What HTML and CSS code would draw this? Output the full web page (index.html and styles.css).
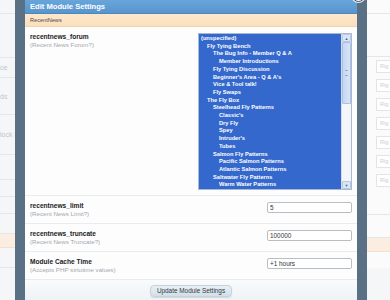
FILE: index.html
```html
<!DOCTYPE html>
<html lang="en">
<head>
  <meta charset="UTF-8" />
  <title>Edit Module Settings</title>
  <meta name="viewport" content="width=device-width, initial-scale=1.0" />
  <link rel="stylesheet" href="styles.css">
</head>
<body>

  <div class="bg-page">
    <div class="bg-left">
      <div class="bg-row h14"></div>
      <div class="bg-row h44"></div>
      <div class="bg-row h20"><span>ce</span></div>
      <div class="bg-row h37"><span>ds</span></div>
      <div class="bg-row h40"><span>lock has</span></div>
      <div class="bg-row h25"></div>
      <div class="bg-row h17"></div>
      <div class="bg-row h17"></div>
      <div class="bg-row h20"></div>
      <div class="bg-row h14 beige"></div>
      <div class="bg-row h20"></div>
    </div>

    <div class="bg-right">
      <div class="bg-row h14"></div>
      <div class="bg-row h43"></div>
      <div class="bg-slot"><span class="num">1</span><span class="fake-input">Rig</span></div>
      <div class="bg-slot"><span class="num">2</span><span class="fake-input">Rig</span></div>
      <div class="bg-slot"><span class="num">3</span><span class="fake-input">Rig</span></div>
      <div class="bg-slot"><span class="num">4</span><span class="fake-input">Rig</span></div>
      <div class="bg-slot"><span class="num">5</span><span class="fake-input">Rig</span></div>
      <div class="bg-slot"><span class="num">6</span><span class="fake-input">Rig</span></div>
      <div class="bg-slot"><span class="num">7</span><span class="fake-input">Rig</span></div>
      <div class="bg-row h25"></div>
      <div class="bg-row h23"></div>
      <div class="bg-row h14 beige"></div>
    </div>
  </div>

  <div class="modal">
    <span class="close"></span>
    <div class="modal-title">Edit Module Settings</div>
    <div class="modal-sub">RecentNews</div>

    <div class="setting">
      <div class="label">
        <b>recentnews_forum</b>
        <small>(Recent News Forum?)</small>
      </div>
      <div class="select">
        <div class="options">
          <div class="opt">(unspecified)</div>
          <div class="opt l1">Fly Tying Bench</div>
          <div class="opt l2">The Bug Info - Member Q &amp; A</div>
          <div class="opt l3">Member Introductions</div>
          <div class="opt l2">Fly Tying Discussion</div>
          <div class="opt l2">Beginner's Area - Q &amp; A's</div>
          <div class="opt l2">Vice &amp; Tool talk!</div>
          <div class="opt l2">Fly Swaps</div>
          <div class="opt l1">The Fly Box</div>
          <div class="opt l2">Steelhead Fly Patterns</div>
          <div class="opt l3">Classic's</div>
          <div class="opt l3">Dry Fly</div>
          <div class="opt l3">Spey</div>
          <div class="opt l3">Intruder's</div>
          <div class="opt l3">Tubes</div>
          <div class="opt l2">Salmon Fly Patterns</div>
          <div class="opt l3">Pacific Salmon Patterns</div>
          <div class="opt l3">Atlantic Salmon Patterns</div>
          <div class="opt l2">Saltwater Fly Patterns</div>
          <div class="opt l3">Warm Water Patterns</div>
        </div>
        <div class="scrollbar">
          <span class="arrow">&#9650;</span>
          <span class="thumb"><i></i></span>
          <span class="track"></span>
          <span class="arrow">&#9660;</span>
        </div>
      </div>
    </div>

    <div class="setting">
      <div class="label">
        <b>recentnews_limit</b>
        <small>(Recent News Limit?)</small>
      </div>
      <div class="field">5</div>
    </div>

    <div class="setting">
      <div class="label">
        <b>recentnews_truncate</b>
        <small>(Recent News Truncate?)</small>
      </div>
      <div class="field">100000</div>
    </div>

    <div class="setting">
      <div class="label">
        <b>Module Cache Time</b>
        <small>(Accepts PHP strtotime values)</small>
      </div>
      <div class="field">+1 hours</div>
    </div>

    <div class="modal-foot">
      <button class="btn">Update Module Settings</button>
    </div>
  </div>

</body>
</html>
```

FILE: styles.css
```css
body {
  margin: 0;
  padding: 0;
  height: 300px;
  overflow: hidden;
  background: #f4f6f7;
  font-family: 'Liberation Sans', Arial, sans-serif;
  position: relative;
}

/* faded page behind the dialog */
.bg-page {
  display: flex;
  justify-content: space-between;
  color: #c2c6ca;
  font-size: 7px;
}

.bg-left {
  width: 25px;
}

.bg-right {
  width: 33px;
  background: #fbfbfb;
}

.bg-row {
  border-bottom: 1px solid #e4e7ea;
  display: flex;
  align-items: center;
  white-space: nowrap;
  box-sizing: border-box;
}

.bg-row.beige {
  background: #fbeee0;
  border-color: #f3e1cc;
}

.h14 { height: 14px; }
.h17 { height: 17px; }
.h20 { height: 20px; }
.h23 { height: 23px; }
.h25 { height: 25px; }
.h37 { height: 37px; }
.h40 { height: 40px; }
.h43 { height: 43px; }
.h44 { height: 44px; }

.bg-slot {
  height: 19px;
  display: flex;
  align-items: center;
  gap: 11px;
  padding-left: 4px;
}

.num {
  width: 4px;
  color: #9fb0bd;
  font-size: 6px;
}

.fake-input {
  flex: 1;
  height: 11px;
  border: 1px solid #e2e5e8;
  border-right: none;
  background: #fff;
  font-size: 5.5px;
  line-height: 11px;
  padding-left: 3px;
  color: #c9cdd1;
}

/* dialog */
.modal {
  position: absolute;
  left: 15px;
  top: -10px;
  width: 332px;
  border: 10px solid rgba(38, 68, 94, 0.76);
  border-radius: 8px;
  background: #fdfdfe;
}

.close {
  position: absolute;
  top: -11px;
  right: -8px;
  width: 11px;
  height: 11px;
  border: 1.5px solid #3b4f5e;
  border-radius: 50%;
  background: #fff;
  box-shadow: 0 0 0 1px #e9eef2;
}

.modal-title {
  height: 14px;
  line-height: 14px;
  padding-left: 5px;
  background: linear-gradient(#68a5da, #5895cd);
  color: #fff;
  font-weight: bold;
  font-size: 7.6px;
  border-bottom: 1px solid #4f87bb;
  box-sizing: border-box;
}

.modal-sub {
  height: 13px;
  line-height: 13px;
  padding-left: 5px;
  background: linear-gradient(#fde8cc, #fbdfbd);
  border-bottom: 1px solid #f2d3ac;
  color: #4a4a4a;
  font-size: 5.6px;
  box-sizing: border-box;
}

.setting {
  display: flex;
  justify-content: space-between;
  align-items: flex-start;
  padding: 6px 5px 5px;
  border-bottom: 1px solid #e9ebed;
}

.setting:first-of-type {
  padding-bottom: 6px;
}

.label {
  display: flex;
  flex-direction: column;
  line-height: 8px;
}

.label b {
  font-size: 6.6px;
  color: #222;
}

.label small {
  font-size: 6.2px;
  color: #a2a8ad;
}

.field {
  width: 85px;
  height: 11px;
  box-sizing: border-box;
  border: 1px solid #b9bec3;
  border-radius: 2px;
  background: #fff;
  font-size: 6.4px;
  line-height: 9px;
  padding-left: 2px;
  color: #333;
}

/* forum list */
.select {
  width: 154px;
  height: 157px;
  box-sizing: border-box;
  border: 1px solid #a9b9cf;
  display: flex;
}

.options {
  flex: 1;
  background: #3468cc;
  padding-top: 1px;
  overflow: hidden;
}

.opt {
  color: #fff;
  font-weight: bold;
  font-size: 5.7px;
  line-height: 7.7px;
  padding-left: 2px;
  white-space: nowrap;
}

.opt.l1 { padding-left: 8px; }
.opt.l2 { padding-left: 14px; }
.opt.l3 { padding-left: 20px; }

.scrollbar {
  width: 9px;
  display: flex;
  flex-direction: column;
  background: #f3f5f9;
  border-left: 1px solid #d3dbe8;
}

.arrow {
  height: 8px;
  font-size: 4px;
  line-height: 8px;
  text-align: center;
  color: #4d6a99;
  background: #dbe5f5;
  border: 1px solid #b8c8e2;
  border-radius: 1px;
  box-sizing: border-box;
}

.thumb {
  height: 62px;
  background: linear-gradient(90deg, #c6d6f2, #d9e4f7);
  border: 1px solid #aabfe3;
  border-radius: 1px;
  box-sizing: border-box;
  display: flex;
  align-items: center;
  justify-content: center;
}

.thumb i {
  width: 3px;
  height: 4px;
  border-top: 1px solid #98acd0;
  border-bottom: 1px solid #98acd0;
}

.track {
  flex: 1;
}

.modal-foot {
  height: 30px;
  padding-top: 5px;
  box-sizing: border-box;
  display: flex;
  justify-content: center;
  align-items: flex-start;
  background: linear-gradient(#f9fbfc, #e9eff3);
}

.btn {
  font-family: 'Liberation Sans', Arial, sans-serif;
  font-size: 6.4px;
  line-height: 10px;
  color: #2f3a44;
  height: 12px;
  padding: 0 6px;
  border: 1px solid #c5d3de;
  border-radius: 4px;
  background: linear-gradient(#e9f0f5, #d2dfe8);
  box-shadow: 0 1px 1px rgba(0, 0, 0, 0.12);
}
```
